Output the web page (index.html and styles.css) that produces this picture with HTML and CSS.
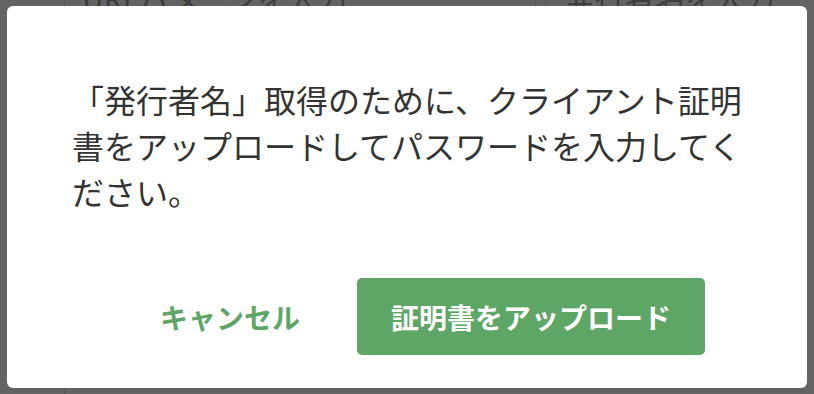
FILE: index.html
```html
<!DOCTYPE html>
<html lang="ja">
<head>
<meta charset="utf-8">
<title>証明書のアップロード</title>
<link rel="stylesheet" href="styles.css">
</head>
<body>
<div class="page">
  <div class="row top-row">
    <div class="field f1">URLパターンを入力</div>
    <div class="field f2">発行者名を入力</div>
  </div>
  <div class="row bottom-row">
    <div class="field f1 low">ファイル</div>
  </div>
</div>
<div class="overlay">
  <div class="dialog">
    <p class="message">「発行者名」取得のために、クライアント証明書をアップロードしてパスワードを入力してください。</p>
    <div class="actions">
      <button class="btn-cancel" type="button">キャンセル</button>
      <button class="btn-primary" type="button">証明書をアップロード</button>
    </div>
  </div>
</div>
</body>
</html>
```

FILE: styles.css
```css
html, body {
  margin: 0;
  padding: 0;
}
body {
  width: 814px;
  height: 394px;
  overflow: hidden;
  background: #636363;
  font-family: "Noto Sans CJK JP", "Noto Sans", sans-serif;
}
.page {
  height: 394px;
  display: flex;
  flex-direction: column;
  justify-content: space-between;
}
.row {
  display: flex;
  padding-left: 64px;
  gap: 9px;
}
.top-row {
  margin-top: -27px;
  height: 48px;
}
.bottom-row {
  height: 40px;
  margin-bottom: -30px;
}
.field {
  border-left: 1px solid #555555;
  border-right: 1px solid #555555;
  color: #3d3d3d;
  font-size: 30px;
  line-height: 48px;
  padding-left: 17px;
  white-space: nowrap;
  overflow: hidden;
}
.f1 {
  width: 453px;
}
.f2 {
  flex: 1;
  padding-left: 19px;
  border-right: none;
}
.low {
  border-right: none;
  font-size: 24px;
  padding-left: 36px;
  line-height: 40px;
  padding-top: 8px;
}
.overlay {
  position: fixed;
  inset: 0;
  display: flex;
  align-items: center;
  justify-content: center;
}
.dialog {
  width: 800px;
  box-sizing: border-box;
  background: #ffffff;
  border-radius: 6px;
  padding: 70px 0 33px 0;
}
.message {
  margin: 0;
  padding: 0 60px 0 65px;
  font-size: 32px;
  line-height: 46px;
  color: #333333;
}
.actions {
  display: flex;
  justify-content: flex-end;
  align-items: center;
  margin-top: 64px;
  padding-right: 102px;
}
.btn-cancel {
  border: none;
  background: none;
  font-family: inherit;
  font-size: 28px;
  font-weight: 700;
  color: #5ea665;
  padding: 0 28px;
  margin-right: 29px;
  height: 77px;
}
.btn-primary {
  border: none;
  background: #5ea665;
  color: #ffffff;
  font-family: inherit;
  font-size: 28px;
  font-weight: 700;
  width: 348px;
  height: 77px;
  border-radius: 5px;
  padding: 0;
}
```
